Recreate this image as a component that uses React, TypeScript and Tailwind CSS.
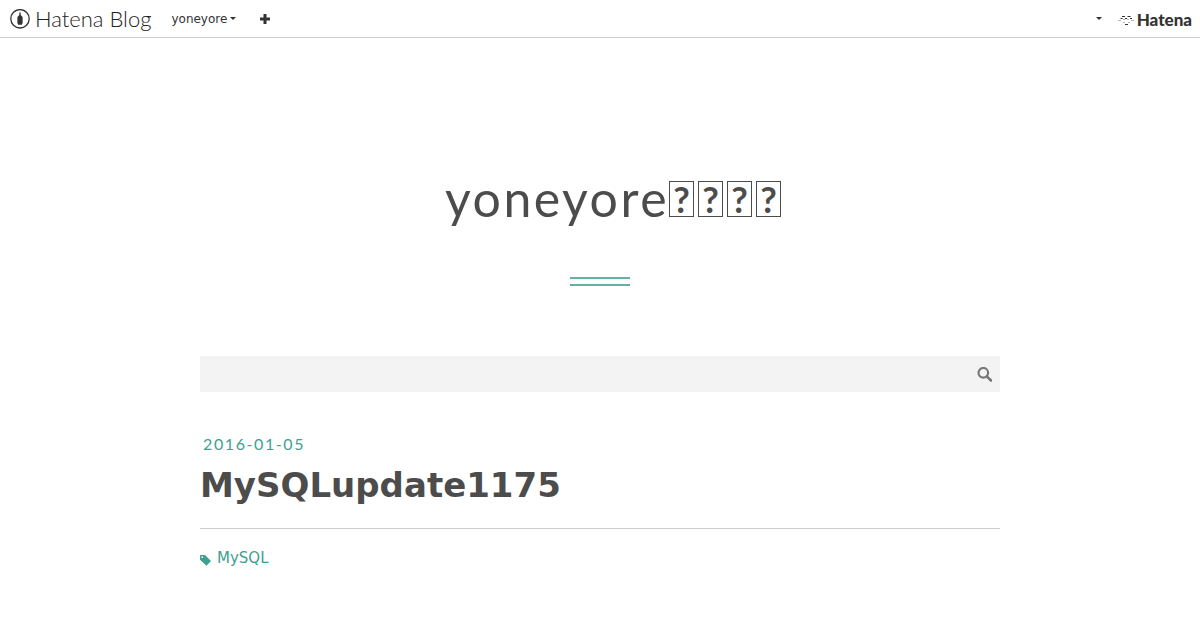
import React from 'react';

// Blog mark: a pen nib inside a ring
function BlogMark() {
  return (
    <svg className="size-5 shrink-0" viewBox="0 0 20 20" aria-hidden="true">
      <circle cx="10" cy="9.800" r="9.200" fill="none" stroke="#333" strokeWidth="1.300" />
      <path d="M9.300 3.500h1.400V6l1.900 2v6l-.7 1.800H8.100L7.400 14V8l1.900-2z" fill="#333" />
    </svg>
  );
}

// Company mark: a face made of short dashes
function HatenaMark() {
  return (
    <svg className="h-3 w-4 shrink-0" viewBox="0 0 16 12" stroke="#333" aria-hidden="true">
      <path d="M4 2.500h3M9.500 2.500h3M2.500 4.500h2M7 4.500h2M12 4.500h2M7 10.500h3" strokeWidth="1" />
      <path d="M0 6.500h3M5 5.500h2M9 5.500h2M13 6.500h3M5 8.500h2M10 8.500h2" strokeWidth="0.700" opacity="0.5" />
    </svg>
  );
}

function Caret() {
  return (
    <svg className="h-[3px] w-[6px]" viewBox="0 0 6 3" fill="#333" aria-hidden="true">
      <path d="M0 0h6L3 3z" />
    </svg>
  );
}

// Placeholder box for a character that has no glyph
function MissingGlyph() {
  return (
    <span className="flex h-9 w-[25px] items-center justify-center border border-[#4c4c4c] font-[Lato,sans-serif] text-4xl leading-8 font-bold tracking-normal">
      ?
    </span>
  );
}

function GlobalHeader() {
  return (
    <header className="flex h-[38px] items-center border-b border-[#ccc] pl-[10px] pr-2 text-[#333]">
      <a href="#" className="flex items-center gap-[5px] font-[Lato,sans-serif] text-[22px] leading-6 font-light text-[#222]">
        <BlogMark />
        Hatena Blog
      </a>
      <button type="button" className="ml-5 flex items-center gap-[3px] font-['DejaVu_Sans',sans-serif] text-xs">
        yoneyore
        <Caret />
      </button>
      <a href="#" aria-label="Write" className="ml-6">
        <svg className="size-[10px]" viewBox="0 0 10 10" fill="#333" aria-hidden="true">
          <path d="M3.500 0h3v3.500H10v3H6.500V10h-3V6.500H0v-3h3.500z" />
        </svg>
      </a>
      <button type="button" aria-label="Menu" className="ml-auto">
        <Caret />
      </button>
      <a href="#" className="ml-4 flex items-center gap-[3px] pt-[2px] font-[Lato,sans-serif] text-[17px] leading-5 font-black">
        <HatenaMark />
        Hatena
      </a>
    </header>
  );
}

export default function App() {
  return (
    <div className="bg-white text-[#4c4c4c]">
      <GlobalHeader />

      {/* Blog title with the double rule below */}
      <div className="flex flex-col items-center pt-[130px]">
        <h1 className="pl-[26px] font-[Lato,sans-serif] text-[50px] leading-[60px] tracking-wider">
          <a href="#" className="flex items-center">
            yoneyore
            <span className="flex gap-1 pt-[2px]">
              <MissingGlyph />
              <MissingGlyph />
              <MissingGlyph />
              <MissingGlyph />
            </span>
          </a>
        </h1>
        <div className="mt-[49px] h-[9px] w-[60px] border-y-2 border-[#5fb3a3]" />
      </div>

      <main className="mx-auto max-w-[800px] pt-[70px]">
        <form role="search" className="flex h-9 items-center bg-[#f3f3f3] pr-2">
          <input type="search" aria-label="Search" className="h-full min-w-0 grow px-2 text-sm outline-none" />
          <button type="submit" aria-label="Search" className="flex">
            <svg className="size-[15px]" viewBox="0 0 15 15" fill="none" stroke="#777" aria-hidden="true">
              <circle cx="6.300" cy="5.800" r="4.800" strokeWidth="2.200" />
              <path d="M9.800 9.300l4.200 4.200" strokeWidth="2.600" strokeLinecap="round" />
            </svg>
          </button>
        </form>

        {/* Entry */}
        <article className="pt-[42px]">
          <a href="#" className="block pl-[3px] font-[Lato,sans-serif] text-base leading-5 tracking-widest text-[#3fa08f]">
            <time dateTime="2016-01-05">2016-01-05</time>
          </a>
          <h2 className="mt-[9px] border-b border-[#ccc] pb-5 font-['DejaVu_Sans',sans-serif] text-[34px] leading-[45px] font-bold">
            <a href="#">MySQLupdate1175</a>
          </h2>
          <a href="#" className="mt-[19px] flex w-fit items-center gap-[6px] font-['DejaVu_Sans',sans-serif] text-[15px] leading-5 text-[#3fa08f]">
            <svg className="mt-1 size-[11px]" viewBox="0 0 11 11" fill="#3fa08f" aria-hidden="true">
              <path fillRule="evenodd" d="M.5 0h4.500L11 6 6.500 10.800 0 4.800V.5zM2.300 1.300a.9.9 0 100 1.800.9.9 0 000-1.800z" />
            </svg>
            MySQL
          </a>
        </article>
      </main>
    </div>
  );
}
